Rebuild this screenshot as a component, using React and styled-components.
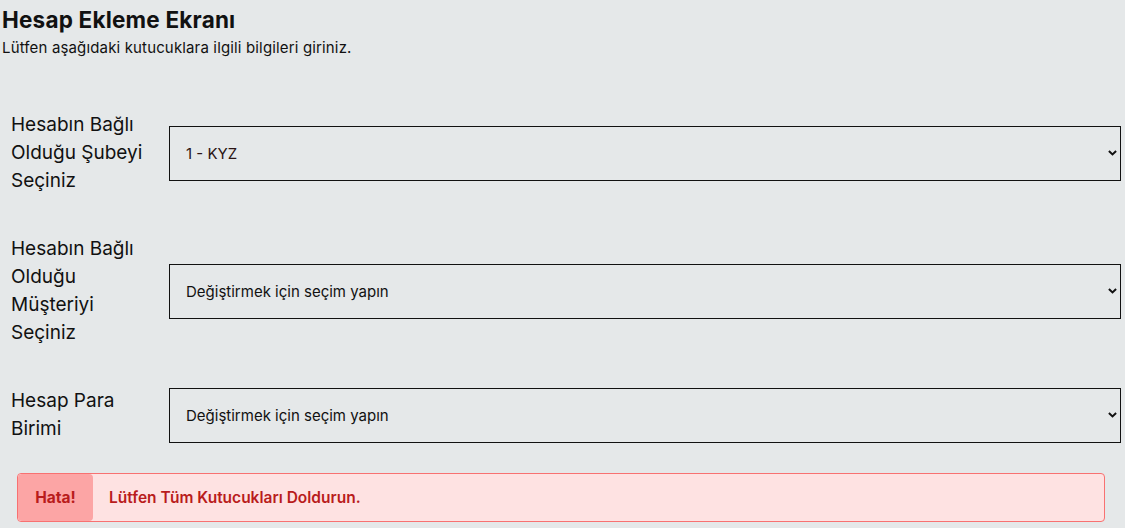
import React from "react";
import styled, { createGlobalStyle } from "styled-components";

const GlobalStyle = createGlobalStyle`
  html, body {
    margin: 0;
    padding: 0;
    background: #e5e8e9;
    font-family: "Inter", "Noto Sans", sans-serif;
    color: #111;
  }
`;

const fields = [
  { label: "Hesabın Bağlı Olduğu Şubeyi Seçiniz", value: "1 - KYZ", dark: true },
  { label: "Hesabın Bağlı Olduğu Müşteriyi Seçiniz", value: "Değiştirmek için seçim yapın" },
  { label: "Hesap Para Birimi", value: "Değiştirmek için seçim yapın" },
];

const App = () => {
  return (
    <PAGE>
      <GlobalStyle />
      <HEADER>
        <h1>Hesap Ekleme Ekranı</h1>
        <p>Lütfen aşağıdaki kutucuklara ilgili bilgileri giriniz.</p>
      </HEADER>
      <FORM>
        {fields.map((f) => (
          <ROW key={f.label}>
            <LABEL>{f.label}</LABEL>
            <SELECTWRAP>
              <SELECT defaultValue={f.value} $dark={f.dark}>
                <option>{f.value}</option>
              </SELECT>
              <CHEVRON viewBox="0 0 10 7">
                <path d="M1 1.2 L5 5 L9 1.2" fill="none" stroke="#111" strokeWidth="2.2" />
              </CHEVRON>
            </SELECTWRAP>
          </ROW>
        ))}
      </FORM>
      <ALERT>
        <ALERTTAG>Hata!</ALERTTAG>
        <ALERTMSG>Lütfen Tüm Kutucukları Doldurun.</ALERTMSG>
      </ALERT>
    </PAGE>
  );
};

export default App;

const PAGE = styled.div`
  padding: 6px 0 6px 0;
`;

const HEADER = styled.div`
  padding-left: 2px;
  h1 {
    margin: 0;
    font-size: 22.5px;
    line-height: 28px;
    font-weight: 700;
    letter-spacing: 0.2px;
    color: #111;
  }
  p {
    margin: 4px 0 0;
    font-size: 15px;
    line-height: 20px;
    letter-spacing: 0.15px;
  }
`;

const FORM = styled.div`
  display: flex;
  flex-direction: column;
  gap: 40px;
  padding: 53px 4px 0 11px;
`;

const ROW = styled.div`
  display: flex;
  align-items: center;
  gap: 16px;
`;

const LABEL = styled.div`
  width: 142px;
  flex-shrink: 0;
  font-size: 19px;
  line-height: 28px;
  color: #111;
`;

const SELECTWRAP = styled.div`
  position: relative;
  flex: 1;
`;

const SELECT = styled.select`
  appearance: none;
  width: 100%;
  height: 55px;
  box-sizing: border-box;
  border: 1.5px solid #111;
  border-radius: 0;
  background: transparent;
  padding: 0 16px;
  font-family: "Inter", "Noto Sans", sans-serif;
  font-size: 15px;
  color: ${(p) => (p.$dark ? "#2a1414" : "#111")};
  outline: none;
`;

const CHEVRON = styled.svg`
  position: absolute;
  right: 4px;
  top: 50%;
  width: 9px;
  height: 7px;
  transform: translateY(-50%);
  pointer-events: none;
`;

const ALERT = styled.div`
  display: flex;
  margin: 30px 20px 0 17px;
  height: 49px;
  box-sizing: border-box;
  border: 1px solid #f87171;
  border-radius: 4px;
  background: #fee2e2;
  overflow: hidden;
  font-size: 15.5px;
  font-weight: 600;
  color: #b91c1c;
`;

const ALERTTAG = styled.div`
  width: 75px;
  display: flex;
  align-items: center;
  justify-content: center;
  background: #fca5a5;
  border-radius: 4px;
  font-weight: 700;
`;

const ALERTMSG = styled.div`
  display: flex;
  align-items: center;
  padding-left: 16px;
`;
